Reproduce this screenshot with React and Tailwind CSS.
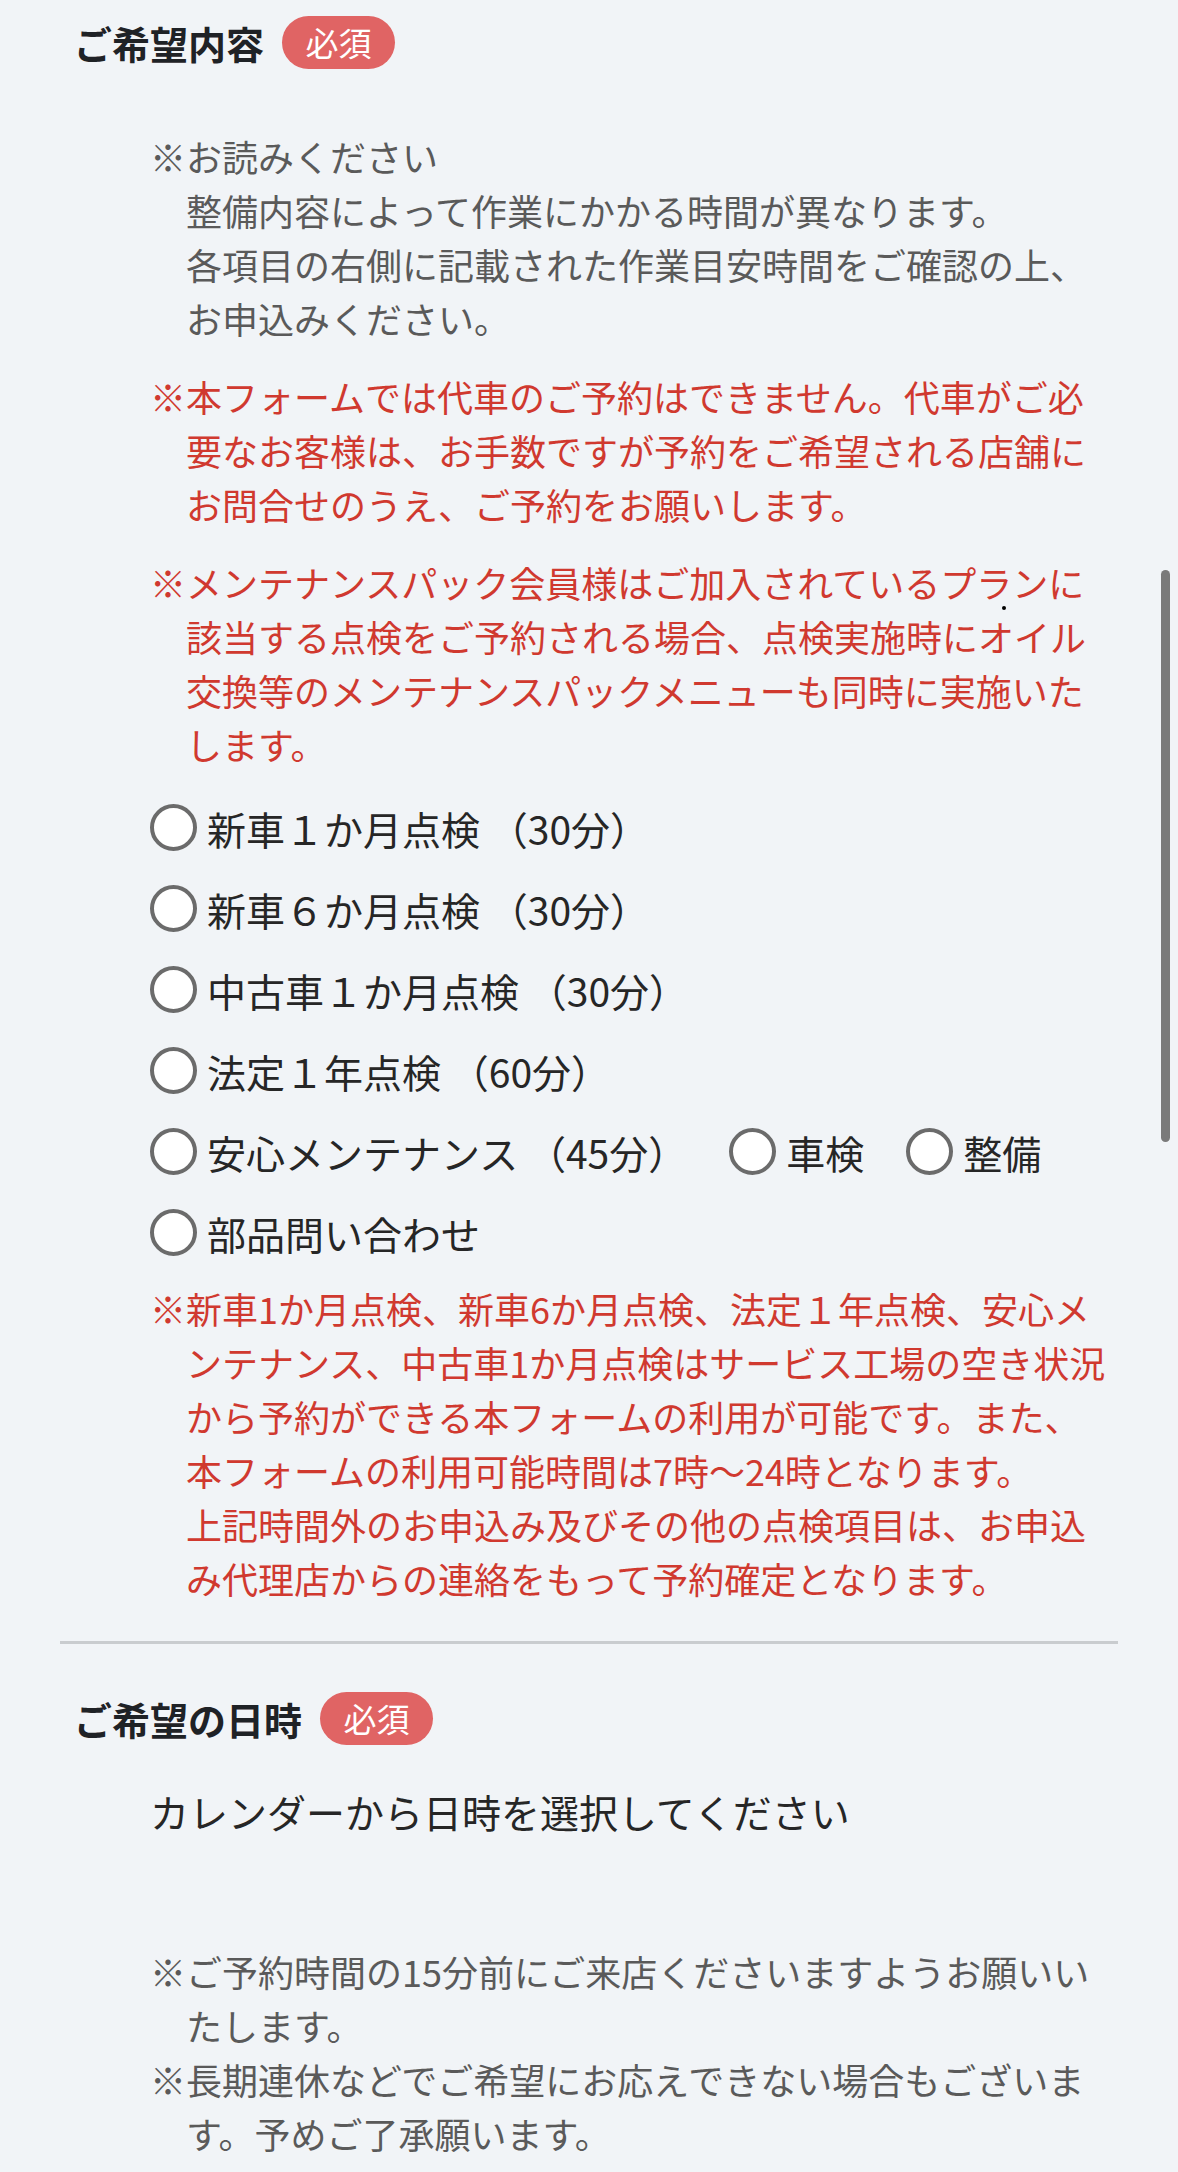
import React from 'react';

const RequiredBadge = () => (
    <span className="ml-[18px] flex h-[53px] w-[113px] items-center justify-center rounded-full bg-[#e06464] text-[33px] leading-none text-white">
        必須
    </span>
);

const SectionTitle = ({ children }) => (
    <div className="flex items-center pl-[14px]">
        <h2 className="text-[38px] font-bold leading-[53px] text-[#1f2226]">{children}</h2>
        <RequiredBadge />
    </div>
);

// hanging "※" paragraphs
const Note = ({ className = '', children }) => (
    <p className={`pl-[36px] indent-[-36px] text-[36px] leading-[54px] ${className}`}>{children}</p>
);

const Radio = ({ label, last }) => (
    <label className={`inline-flex items-center ${last ? '' : 'mr-[42px]'}`}>
        <span className="h-[47px] w-[47px] shrink-0 rounded-full border-[4px] border-[#6b6b6b] bg-white" />
        <span className="ml-[10px] whitespace-nowrap text-[39px] leading-[58px] text-[#262626]">{label}</span>
    </label>
);

const rows = [
    ['新車１か月点検 （30分）'],
    ['新車６か月点検 （30分）'],
    ['中古車１か月点検 （30分）'],
    ['法定１年点検 （60分）'],
    ['安心メンテナンス （45分）', '車検', '整備'],
    ['部品問い合わせ'],
];

export default function App() {
    return (
        <div className="relative min-h-[2172px] w-full overflow-hidden bg-[#f1f4f7] font-['Noto_Sans_CJK_JP',sans-serif]">
            <div className="px-[60px]">
                {/* --- ご希望内容 --- */}
                <section className="pt-[16px]">
                    <SectionTitle>ご希望内容</SectionTitle>

                    <div className="pl-[90px]">
                        <Note className="mt-[60px] text-[#5a5a5a]">
                            ※お読みください<br />
                            整備内容によって作業にかかる時間が異なります。<br />
                            各項目の右側に記載された作業目安時間をご確認の上、<br />
                            お申込みください。
                        </Note>

                        <Note className="mt-[24px] text-[#d0392f]">
                            ※本フォームでは代車のご予約はできません。代車がご必<br />
                            要なお客様は、お手数ですが予約をご希望される店舗に<br />
                            お問合せのうえ、ご予約をお願いします。
                        </Note>

                        <Note className="mt-[24px] text-[#d0392f]">
                            ※メンテナンスパック会員様はご加入されているプランに<br />
                            該当する点検をご予約される場合、点検実施時にオイル<br />
                            交換等のメンテナンスパックメニューも同時に実施いた<br />
                            します。
                        </Note>

                        <div className="mt-[16px]">
                            {rows.map((row, i) => (
                                <div key={i} className="flex h-[81px] items-center">
                                    {row.map((label, j) => (
                                        <Radio key={label} label={label} last={j === row.length - 1} />
                                    ))}
                                </div>
                            ))}
                        </div>

                        <Note className="mt-[8px] text-[#d0392f]">
                            ※新車1か月点検、新車6か月点検、法定１年点検、安心メ<br />
                            ンテナンス、中古車1か月点検はサービス工場の空き状況<br />
                            から予約ができる本フォームの利用が可能です。また、<br />
                            本フォームの利用可能時間は7時〜24時となります。<br />
                            上記時間外のお申込み及びその他の点検項目は、お申込<br />
                            み代理店からの連絡をもって予約確定となります。
                        </Note>
                    </div>
                </section>

                <div className="mt-[36px] h-[3px] w-full bg-[#c9cccf]" />

                {/* --- ご希望の日時 --- */}
                <section className="pt-[48px]">
                    <SectionTitle>ご希望の日時</SectionTitle>

                    <div className="pl-[90px]">
                        <p className="mt-[37px] text-[39px] leading-[58px] text-[#262626]">
                            カレンダーから日時を選択してください
                        </p>

                        <div className="mt-[104px] text-[#5a5a5a]">
                            <Note>
                                ※ご予約時間の15分前にご来店くださいますようお願いい<br />
                                たします。
                            </Note>
                            <Note>
                                ※長期連休などでご希望にお応えできない場合もございま<br />
                                す。予めご了承願います。
                            </Note>
                        </div>
                    </div>
                </section>
            </div>

            {/* overlay scrollbar + stray dot from the capture */}
            <div className="absolute left-[1161px] top-[570px] h-[572px] w-[9px] rounded-full bg-[#7a7a7a]" />
            <div className="absolute left-[1002px] top-[606px] h-[4px] w-[4px] rounded-full bg-black" />
        </div>
    );
}
